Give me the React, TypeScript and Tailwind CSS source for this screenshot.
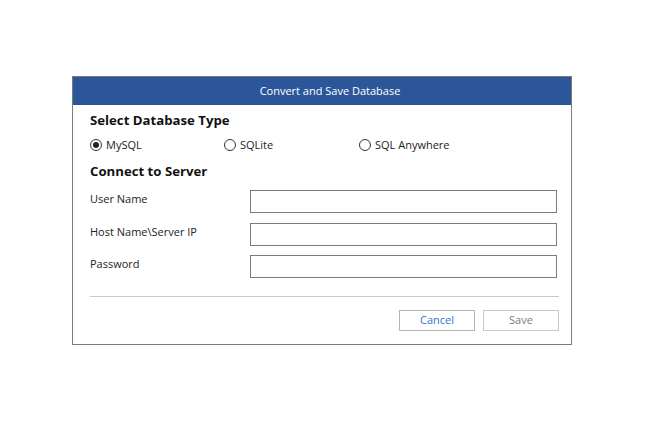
import { useState } from "react";

const font = { fontFamily: '"Open Sans", "Noto Sans", sans-serif' };

type DbType = "mysql" | "sqlite" | "anywhere";

const options: { id: DbType; label: string; width: string }[] = [
  { id: "mysql", label: "MySQL", width: "w-[134px]" },
  { id: "sqlite", label: "SQLite", width: "w-[135px]" },
  { id: "anywhere", label: "SQL Anywhere", width: "w-[150px]" },
];

function Radio({ checked, label, onClick }: { checked: boolean; label: string; onClick: () => void }) {
  return (
    <button onClick={onClick} className="flex items-center gap-[4px] h-[16px] text-[11px] text-[#222]">
      <span className="flex items-center justify-center w-[12px] h-[12px] rounded-full border border-[#333] bg-white">
        {checked && <span className="w-[6px] h-[6px] rounded-full bg-[#222]" />}
      </span>
      {label}
    </button>
  );
}

function Field({ label, className }: { label: string; className: string }) {
  return (
    <div className={`flex items-center ${className}`}>
      <span className="w-[160px] text-[11px] text-[#222] -mt-[4px]">{label}</span>
      <input className="w-[307px] h-[23px] border border-[#7a7a7a] bg-white outline-none px-1 text-[11px]" />
    </div>
  );
}

export default function App() {
  const [db, setDb] = useState<DbType>("mysql");

  return (
    <div className="w-[645px] h-[421px] bg-white pt-[76px] pl-[72px]" style={font}>
      <div className="w-[500px] h-[269px] border border-[#7a7a7a] bg-white flex flex-col">
        <div className="h-[28px] pl-[16px] bg-[#2b579a] text-white text-[11px] flex items-center justify-center">
          Convert and Save Database
        </div>
        <div className="pl-[17px] pr-[12px] flex flex-col">
          <h2 className="mt-[6px] h-[18px] leading-[18px] text-[13.2px] font-bold text-[#111]">Select Database Type</h2>
          <div className="mt-[8px] flex">
            {options.map((o) => (
              <div key={o.id} className={o.width}>
                <Radio checked={db === o.id} label={o.label} onClick={() => setDb(o.id)} />
              </div>
            ))}
          </div>
          <h2 className="mt-[9px] h-[18px] leading-[18px] text-[13.2px] font-bold text-[#111]">Connect to Server</h2>
          <Field label="User Name" className="mt-[10px]" />
          <Field label="Host Name\Server IP" className="mt-[10px]" />
          <Field label="Password" className="mt-[9px]" />
          <div className="mt-[18px] h-px w-[469px] bg-[#c8c8c8]" />
          <div className="mt-[13px] flex justify-end gap-[8px]">
            <button className="w-[76px] h-[21px] border border-[#b4b4b4] text-[11px] text-[#2e75c8] bg-white">
              Cancel
            </button>
            <button className="w-[76px] h-[21px] border border-[#c8c8c8] text-[11px] text-[#7a7a7a] bg-white">
              Save
            </button>
          </div>
        </div>
      </div>
    </div>
  );
}
